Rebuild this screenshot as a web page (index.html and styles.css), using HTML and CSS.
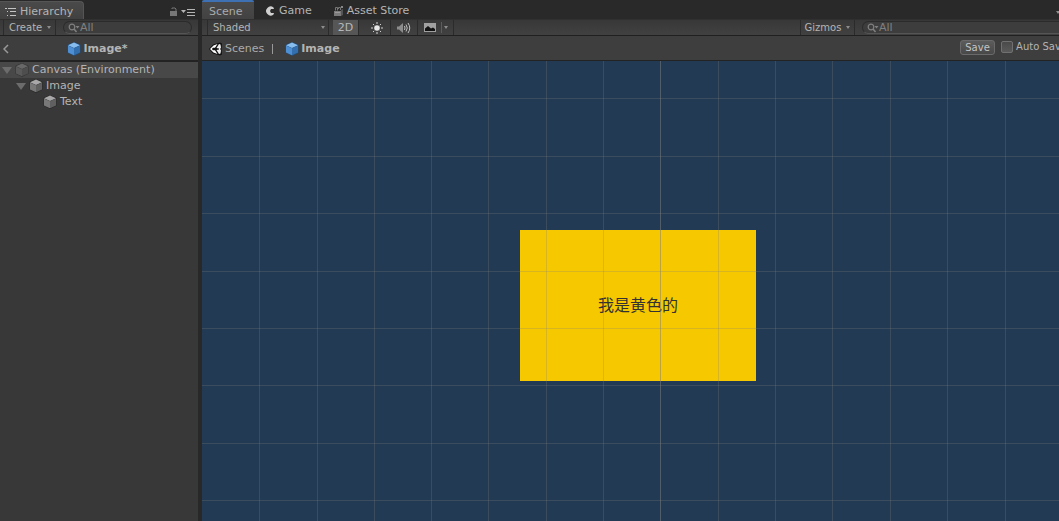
FILE: index.html
```html
<!DOCTYPE html>
<html lang="en">
<head>
<meta charset="utf-8">
<title>Scene editor</title>
<link rel="stylesheet" href="styles.css">
</head>
<body>
<svg class="defs" aria-hidden="true">
  <symbol id="cube" viewBox="0 0 14 14">
    <path d="M7 0 13.500 2.800V10.800L7 14 .5 10.800V2.800Z" fill="var(--edge)"/>
    <path d="M7 .5 13 3.200 7 6 1 3.200Z" fill="var(--top)"/>
    <path d="M1 3.400 7 6.200V13.300L1 10.400Z" fill="var(--left)"/>
    <path d="M13 3.400 7 6.200V13.300L13 10.400Z" fill="var(--right)"/>
  </symbol>
  <symbol id="search" viewBox="0 0 12 10">
    <circle cx="4" cy="4" r="2.800" fill="none" stroke="currentColor" stroke-width="1.200"/>
    <path d="M6 6 8.500 9" stroke="currentColor" stroke-width="1.500"/>
    <path d="M7.500 3H11.500L9.500 5.500Z" fill="currentColor"/>
  </symbol>
</svg>
<div class="editor">
  <aside class="panel hierarchy">
    <div class="tabs">
      <button class="tab tab-hierarchy">
        <svg width="12" height="10" viewBox="0 0 12 10" fill="#c4c4c4"><path d="M0 1h2v1H0zM3 1h8v1H3zM2 4h1v1H2zM5 4h6v1H5zM2 8h1v1H2zM5 8h6v1H5z"/></svg>
        Hierarchy
      </button>
      <div class="tab-tools">
        <button class="bare" aria-label="Lock"><svg width="8" height="10" viewBox="0 0 8 10"><path d="M0 4h7v5H0z" fill="#777"/><path d="M2 2V1h3l1 1v3" fill="none" stroke="#777"/></svg></button>
        <button class="bare" aria-label="Panel menu"><svg width="15" height="8" viewBox="0 0 15 8" fill="#b4b4b4"><path d="M0 2h5L2.500 5zM6 1h8v1H6zM6 4h8v1H6zM6 7h8v1H6z"/></svg></button>
      </div>
    </div>
    <div class="toolbar">
      <button class="tool create">Create <i class="caret"></i></button>
      <label class="search"><svg width="12" height="10"><use href="#search"/></svg><input type="text" placeholder="All" aria-label="Search hierarchy"></label>
    </div>
    <div class="crumbs title">
      <button class="bare back" aria-label="Back"><svg width="6" height="10" viewBox="0 0 6 10"><path d="M5 1 1 5l4 4" fill="none" stroke="#999" stroke-width="1.500"/></svg></button>
      <h1 class="name"><svg class="cube blue" width="14" height="14"><use href="#cube"/></svg>Image*</h1>
    </div>
    <ul class="tree">
      <li class="row selected"><i class="fold"></i><svg class="cube dim" width="14" height="14"><use href="#cube"/></svg>Canvas (Environment)</li>
      <li class="row child"><i class="fold"></i><svg class="cube gray" width="14" height="14"><use href="#cube"/></svg>Image</li>
      <li class="row grandchild"><svg class="cube gray" width="14" height="14"><use href="#cube"/></svg>Text</li>
    </ul>
  </aside>
  <main class="panel scene">
    <div class="tabs">
      <button class="tab tab-scene">Scene</button>
      <button class="tab tab-game"><svg width="10" height="10" viewBox="0 0 10 10"><path d="M8.500 1.500A4.500 4.500 0 1 0 8.500 8.500L9 7H6L5 5 6 3H9Z" fill="#d0d0d0"/></svg>Game</button>
      <button class="tab tab-store"><svg width="10" height="11" viewBox="0 0 10 11"><path d="M0 5h7v5H0z" fill="#7a7a7a"/><path d="M1.500 4.500V1.500h2v3M4.500 3V1.500h2V4" fill="none" stroke="#777"/><path d="M7 4l2-1v6l-2 1z" fill="#555"/><path d="M7 0h2v2H7z" fill="#888"/><path d="M1 6h5v1H1z" fill="#999"/></svg>Asset Store</button>
      <div class="tab-tools edge"><i class="caret"></i></div>
    </div>
    <div class="toolbar">
      <div class="shading"><select aria-label="Draw mode"><option>Shaded</option></select><i class="caret"></i></div>
      <button class="tool mode">2D</button>
      <button class="tool light" aria-label="Lighting"><svg width="12" height="12" viewBox="0 0 12 12"><circle cx="6" cy="6" r="2.800" fill="#e8e8e8"/><path d="M6 0v2M6 10v2M0 6h2M10 6h2M2 2l1.200 1.200M8.800 8.800 10 10M10 2 8.800 3.200M3.200 8.800 2 10" stroke="#d0d0d0"/></svg></button>
      <button class="tool audio" aria-label="Audio"><svg width="14" height="12" viewBox="0 0 14 12"><path d="M0 4.500h2L6 1v10L2 7.500H0z" fill="#8c8c8c"/><path d="M7.500 4q1 2 0 4M9 2.500q2.500 3.500 0 7M11 1q3.500 5 0 10" fill="none" stroke="#c0c0c0"/></svg></button>
      <button class="tool effects" aria-label="Effects"><svg width="12" height="9" viewBox="0 0 12 9"><path d="M0 0h12v9H0z" fill="#a0a0a0"/><path d="M1 8V5.500L4 3l3 2.500 2-1 2 1.500v2z" fill="#111"/></svg><span class="bar"></span><i class="caret"></i></button>
      <div class="toolbar-end">
        <button class="tool gizmos">Gizmos <i class="caret"></i></button>
        <label class="search"><svg width="12" height="10"><use href="#search"/></svg><input type="text" placeholder="All" aria-label="Search scene"></label>
      </div>
    </div>
    <div class="crumbs">
      <a class="crumb" href="#"><svg width="14" height="14" viewBox="0 0 14 14"><path d="M0 7 4 2.500 11 .5l2 1-.5 5.500.5 5.500-2 1-7-2Z" fill="#111"/><path d="M1 7 4.500 3.500 8.500 2 6 5.800H3.800L3 7l.8 1.200H6L8.500 12 4.500 10.500Z" fill="#fff"/><path d="M10 2l1.500.5.5 3-.8 1.500.8 1.500-.5 3L10 12 7.500 8 10 7.500V6.500L7.500 6Z" fill="#eee"/><path d="M8 7h-3" stroke="#111"/></svg>Scenes</a>
      <span class="divider"></span>
      <a class="crumb current" href="#"><svg class="cube blue" width="14" height="14"><use href="#cube"/></svg>Image</a>
      <div class="save-tools">
        <button class="save">Save</button>
        <label class="auto"><input type="checkbox">Auto Save</label>
      </div>
    </div>
    <div class="viewport">
      <div class="ui-image">我是黄色的</div>
      <svg class="grid" aria-hidden="true">
        <path class="minor" d="M57.500 0v2000M115.500 0v2000M172.500 0v2000M229.500 0v2000M286.500 0v2000M344.500 0v2000M401.500 0v2000M516.500 0v2000M573.500 0v2000M630.500 0v2000M688.500 0v2000M745.500 0v2000M803.500 0v2000M0 37.500h3000M0 95.500h3000M0 152.500h3000M0 210.500h3000M0 267.500h3000M0 324.500h3000M0 382.500h3000M0 439.500h3000"/>
        <path class="major" d="M458.500 0v2000"/>
      </svg>
    </div>
  </main>
</div>
</body>
</html>
```
FILE: styles.css
```css
* { box-sizing: border-box; }
body { margin: 0; background: #282828; color: #b4b4b4; font: 11px/16px "DejaVu Sans", "Noto Sans CJK SC", sans-serif; }
button, input, select { font: inherit; color: inherit; margin: 0; padding: 0; border: 0; background: none; }
.defs { position: absolute; width: 0; height: 0; }
svg { flex: none; display: block; }
.editor { display: flex; gap: 4px; height: 100vh; overflow: hidden; }
.panel { display: flex; flex-direction: column; min-width: 0; overflow: hidden; }
.hierarchy { flex: 0 0 198px; background: #383838; }
.scene { flex: 1; }

.tabs { display: flex; flex: none; height: 19px; background: #292929; }
.tab { display: flex; align-items: center; height: 19px; padding-top: 3px; white-space: nowrap; }
.tab-hierarchy { gap: 3px; width: 84px; padding-left: 5px; margin-top: 1px; background: linear-gradient(#4a4a4a, #404040); border: 1px solid #555; border-width: 1px 1px 0 0; border-radius: 0 4px 0 0; padding-top: 1px; }
.tab-scene { width: 52px; padding-left: 7px; background: linear-gradient(#4a4a4a, #424242); border-top: 2px solid #3e71b4; padding-top: 2px; border-radius: 2px 2px 0 0; color: #aaa; }
.tab-game { gap: 4px; margin-left: 11px; }
.tab-store { gap: 3px; margin-left: 22px; }
.tab-tools { display: flex; align-items: center; gap: 3px; margin-left: auto; padding: 5px 2px 0 0; }
.edge { margin-right: -3px; }
.bare { display: flex; }

.toolbar { display: flex; flex: none; height: 17px; border-top: 1px solid #303030; border-bottom: 1px solid #202020; background: linear-gradient(#383838, #414141); font-size: 10px; }
.tool { display: flex; align-items: center; justify-content: center; border-right: 1px solid #2b2b2b; white-space: nowrap; }
.caret { flex: none; border: 2px solid transparent; border-top: 3px solid #8c8c8c; border-bottom: 0; }
.create { justify-content: flex-start; gap: 5px; width: 53px; margin-left: 3px; padding-left: 5px; border-left: 1px solid #2b2b2b; }
.search { display: flex; align-items: center; flex: 1; min-width: 0; height: 13px; margin: 1px 6px 0 7px; padding-left: 4px; border-radius: 7px; border: 1px solid #2b2b2b; border-bottom-color: #555; background: #3d3d3d; color: #808080; }
.search input { flex: 1; min-width: 0; width: 0; height: 12px; outline: 0; font-size: 11px; }
.search input::placeholder { color: #808080; opacity: 1; }
.shading { display: flex; align-items: center; width: 127px; margin-right: 4px; border-right: 1px solid #2b2b2b; }
.shading::before { content: ""; width: 5px; height: 15px; border-right: 1px solid #2b2b2b; }
.shading select { flex: 1; appearance: none; padding-left: 5px; outline: 0; }
.shading .caret { margin-right: 3px; }
.mode { width: 26px; background: #565656; font-size: 11px; color: #b8b8b8; }
.light { width: 32px; padding-left: 5px; }
.audio { width: 27px; }
.effects { width: 36px; gap: 5px; }
.bar { width: 1px; height: 11px; margin-right: -3px; background: #5c5c5c; }
.toolbar-end { display: flex; margin-left: auto; width: 259px; }
.gizmos { gap: 5px; width: 55px; border-left: 1px solid #2b2b2b; }
.toolbar-end .search { margin-right: -8px; }

.crumbs { display: flex; flex: none; align-items: center; height: 25px; padding: 1px 0 0 7px; background: #3e3e3e; border-bottom: 1px solid #232323; }
.title { padding-left: 3px; border-bottom-width: 2px; height: 26px; }
.name { display: flex; align-items: center; gap: 2px; margin: 0 auto; padding-right: 12px; font-size: 11px; }
.crumb { display: flex; align-items: center; gap: 2px; color: #aaa; text-decoration: none; }
.current { font-weight: bold; color: #b4b4b4; }
.divider { width: 1px; height: 10px; margin: 0 12px 0 8px; background: #999; }
.save-tools { display: flex; align-items: center; gap: 6px; margin: -3px -8px 0 auto; font-size: 10px; white-space: nowrap; }
.save { width: 35px; height: 15px; line-height: 13px; border: 1px solid #6a6a6a; border-radius: 3px; background: linear-gradient(#5c5c5c, #484848); color: #c4c4c4; }
.auto { display: flex; align-items: center; gap: 3px; }
.auto input { appearance: none; width: 12px; height: 12px; border: 1px solid #707070; border-radius: 2px; background: linear-gradient(#4a4a4a, #5a5a5a); }

.tree { list-style: none; margin: 0; padding: 0; }
.row { display: flex; align-items: center; gap: 3px; height: 16px; padding-left: 2px; white-space: nowrap; }
.selected { background: #484848; }
.child { padding-left: 16px; }
.grandchild { padding-left: 43px; }
.fold { flex: none; border: 5px solid transparent; border-top: 7px solid #6c6c6c; border-bottom: 0; }
.blue { --edge: #244c76; --top: #86bdee; --left: #4d8fd2; --right: #336fae; }
.gray { --edge: #282828; --top: #a8a8a8; --left: #787878; --right: #606060; }
.dim { --edge: #333; --top: #686868; --left: #5a5a5a; --right: #4e4e4e; }

.viewport { position: relative; flex: 1; min-height: 0; overflow: hidden; background: #223a53; }
.ui-image { position: absolute; left: 318px; top: 169px; width: 236px; height: 151px; padding-bottom: 4px; display: grid; place-items: center; background: #f6c800; color: #323232; font: 16px/20px "Noto Sans CJK SC", sans-serif; }
.grid { position: absolute; inset: 0; width: 100%; height: 100%; fill: none; }
.minor { stroke: #808080; stroke-opacity: .26; }
.major { stroke: #808080; stroke-opacity: .5; }
```
